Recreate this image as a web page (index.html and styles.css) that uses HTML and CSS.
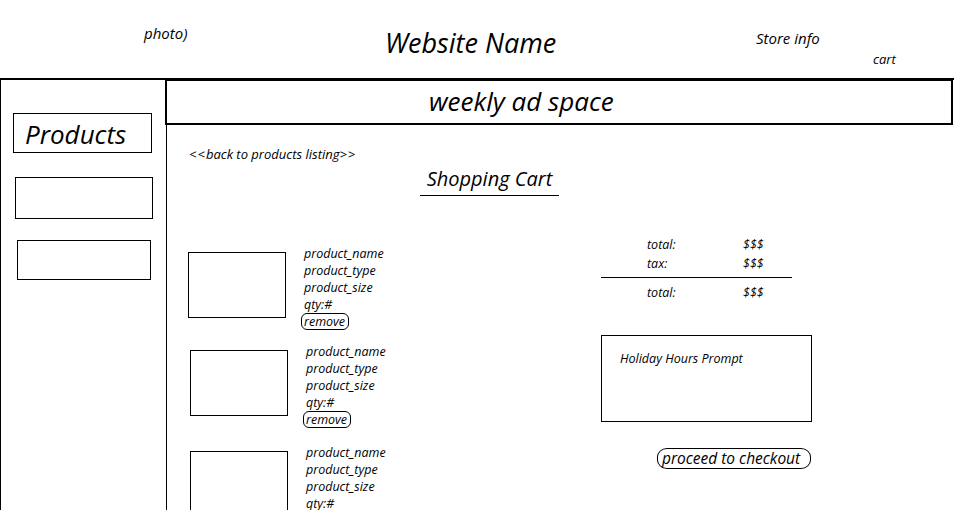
FILE: index.html
```html
<!DOCTYPE html>
<html lang="en">
<head>
  <meta charset="UTF-8">
  <meta name="viewport" content="width=device-width, initial-scale=1">
  <link rel="stylesheet" href="styles.css">
  <title>Shopping Cart</title>
</head>
<body>
  <div class="header">
    <div class="photo">photo)</div>
    <div class="site-name">Website Name</div>
    <div class="store">
      <div class="store-info">Store info</div>
      <div class="cart">cart</div>
    </div>
  </div>

  <div class="page">
    <div class="sidebar">
      <div class="side-box products">Products</div>
      <div class="side-box box2"></div>
      <div class="side-box box3"></div>
    </div>

    <div class="content">
      <div class="ad">weekly ad space</div>
      <div class="back"><span class="arrows">&lt;&lt;</span>back to products listing<span class="arrows">&gt;&gt;</span></div>
      <div class="title-wrap">
        <div class="title">Shopping Cart</div>
      </div>

      <div class="cart-area">
        <div class="items">
          <div class="item">
            <div class="thumb"></div>
            <div class="info">
              <div>product_name</div>
              <div>product_type</div>
              <div>product_size</div>
              <div>qty:#</div>
              <button class="remove">remove</button>
            </div>
          </div>
          <div class="item item2">
            <div class="thumb"></div>
            <div class="info">
              <div>product_name</div>
              <div>product_type</div>
              <div>product_size</div>
              <div>qty:#</div>
              <button class="remove">remove</button>
            </div>
          </div>
          <div class="item item3">
            <div class="thumb"></div>
            <div class="info">
              <div>product_name</div>
              <div>product_type</div>
              <div>product_size</div>
              <div>qty:#</div>
            </div>
          </div>
        </div>

        <div class="summary">
          <div class="totals">
            <div class="row"><span class="label">total:</span><span>$$$</span></div>
            <div class="row"><span class="label">tax:</span><span>$$$</span></div>
          </div>
          <div class="grand">
            <div class="row"><span class="label">total:</span><span>$$$</span></div>
          </div>
          <div class="holiday">Holiday Hours Prompt</div>
          <button class="checkout">proceed to checkout</button>
        </div>
      </div>
    </div>
  </div>
</body>
</html>
```

FILE: styles.css
```css
* {
  margin: 0;
  padding: 0;
  box-sizing: border-box;
}
body {
  width: 954px;
  height: 510px;
  overflow: hidden;
  background: #fff;
  color: #000;
  font-family: "Open Sans", "Noto Sans", sans-serif;
  font-style: italic;
}
/* top header */
.header {
  display: flex;
  height: 78px;
}
.photo {
  width: 241px;
  margin-left: 144px;
  margin-top: 23px;
  font-size: 15px;
}
.site-name {
  width: 371px;
  margin-top: 24px;
  font-size: 27px;
}
.store {
  margin-top: 28px;
  font-size: 15px;
}
.cart {
  margin-left: 117px;
  margin-top: 2px;
  font-size: 13px;
}
/* main frame */
.page {
  display: flex;
  height: 432px;
  overflow: hidden;
  border-top: 2px solid #000;
}
.sidebar {
  width: 167px;
  border-left: 1px solid #000;
  border-right: 1px solid #000;
}
.side-box {
  border: 1px solid #000;
}
.products {
  width: 139px;
  height: 40px;
  margin-left: 12px;
  margin-top: 33px;
  padding-left: 11px;
  font-size: 26px;
  line-height: 40px;
}
.box2 {
  width: 138px;
  height: 42px;
  margin-left: 14px;
  margin-top: 24px;
}
.box3 {
  width: 134px;
  height: 40px;
  margin-left: 16px;
  margin-top: 21px;
}
.content {
  flex: 1;
}
.ad {
  height: 45px;
  margin-left: -2px;
  margin-right: 1px;
  border: 2px solid #000;
  border-top-width: 1px;
  padding-left: 262px;
  font-size: 26px;
  line-height: 40px;
}
.back {
  margin-left: 22px;
  margin-top: 20px;
  font-size: 13px;
}
.arrows {
  letter-spacing: 1px;
}
.title-wrap {
  display: flex;
  margin-left: 253px;
  margin-top: 2px;
}
.title {
  width: 139px;
  padding-bottom: 3px;
  border-bottom: 1px solid #000;
  font-size: 20px;
  text-align: center;
}
/* cart listing */
.cart-area {
  display: flex;
  margin-top: 49px;
}
.items {
  width: 434px;
  padding-left: 21px;
}
.item {
  display: flex;
  gap: 18px;
  height: 98px;
}
.item2,
.item3 {
  margin-left: 2px;
}
.item2 {
  height: 101px;
}
.thumb {
  width: 98px;
  height: 66px;
  margin-top: 7px;
  border: 1px solid #000;
}
.info {
  font-size: 12.5px;
  line-height: 17px;
}
.remove {
  display: block;
  margin-left: -3px;
  padding: 0 3px 0 2px;
  border: 1px solid #000;
  border-radius: 6px;
  background: #fff;
  font: inherit;
  line-height: 15px;
}
/* summary column */
.summary {
  width: 240px;
  margin-top: -9px;
}
.row {
  display: flex;
  height: 19px;
  font-size: 12.5px;
}
.label {
  width: 96px;
}
.totals {
  width: 191px;
  padding-left: 46px;
  padding-bottom: 3px;
  border-bottom: 1px solid #000;
}
.grand {
  padding-left: 46px;
  padding-top: 6px;
}
.holiday {
  width: 211px;
  height: 87px;
  margin-top: 32px;
  padding-left: 18px;
  padding-top: 14px;
  border: 1px solid #000;
  font-size: 12.5px;
}
.checkout {
  display: block;
  margin-left: 56px;
  margin-top: 26px;
  padding: 0 10px 1px 4px;
  border: 1px solid #000;
  border-radius: 10px / 9px;
  background: #fff;
  font: inherit;
  font-size: 15.5px;
  line-height: 18px;
}
```
